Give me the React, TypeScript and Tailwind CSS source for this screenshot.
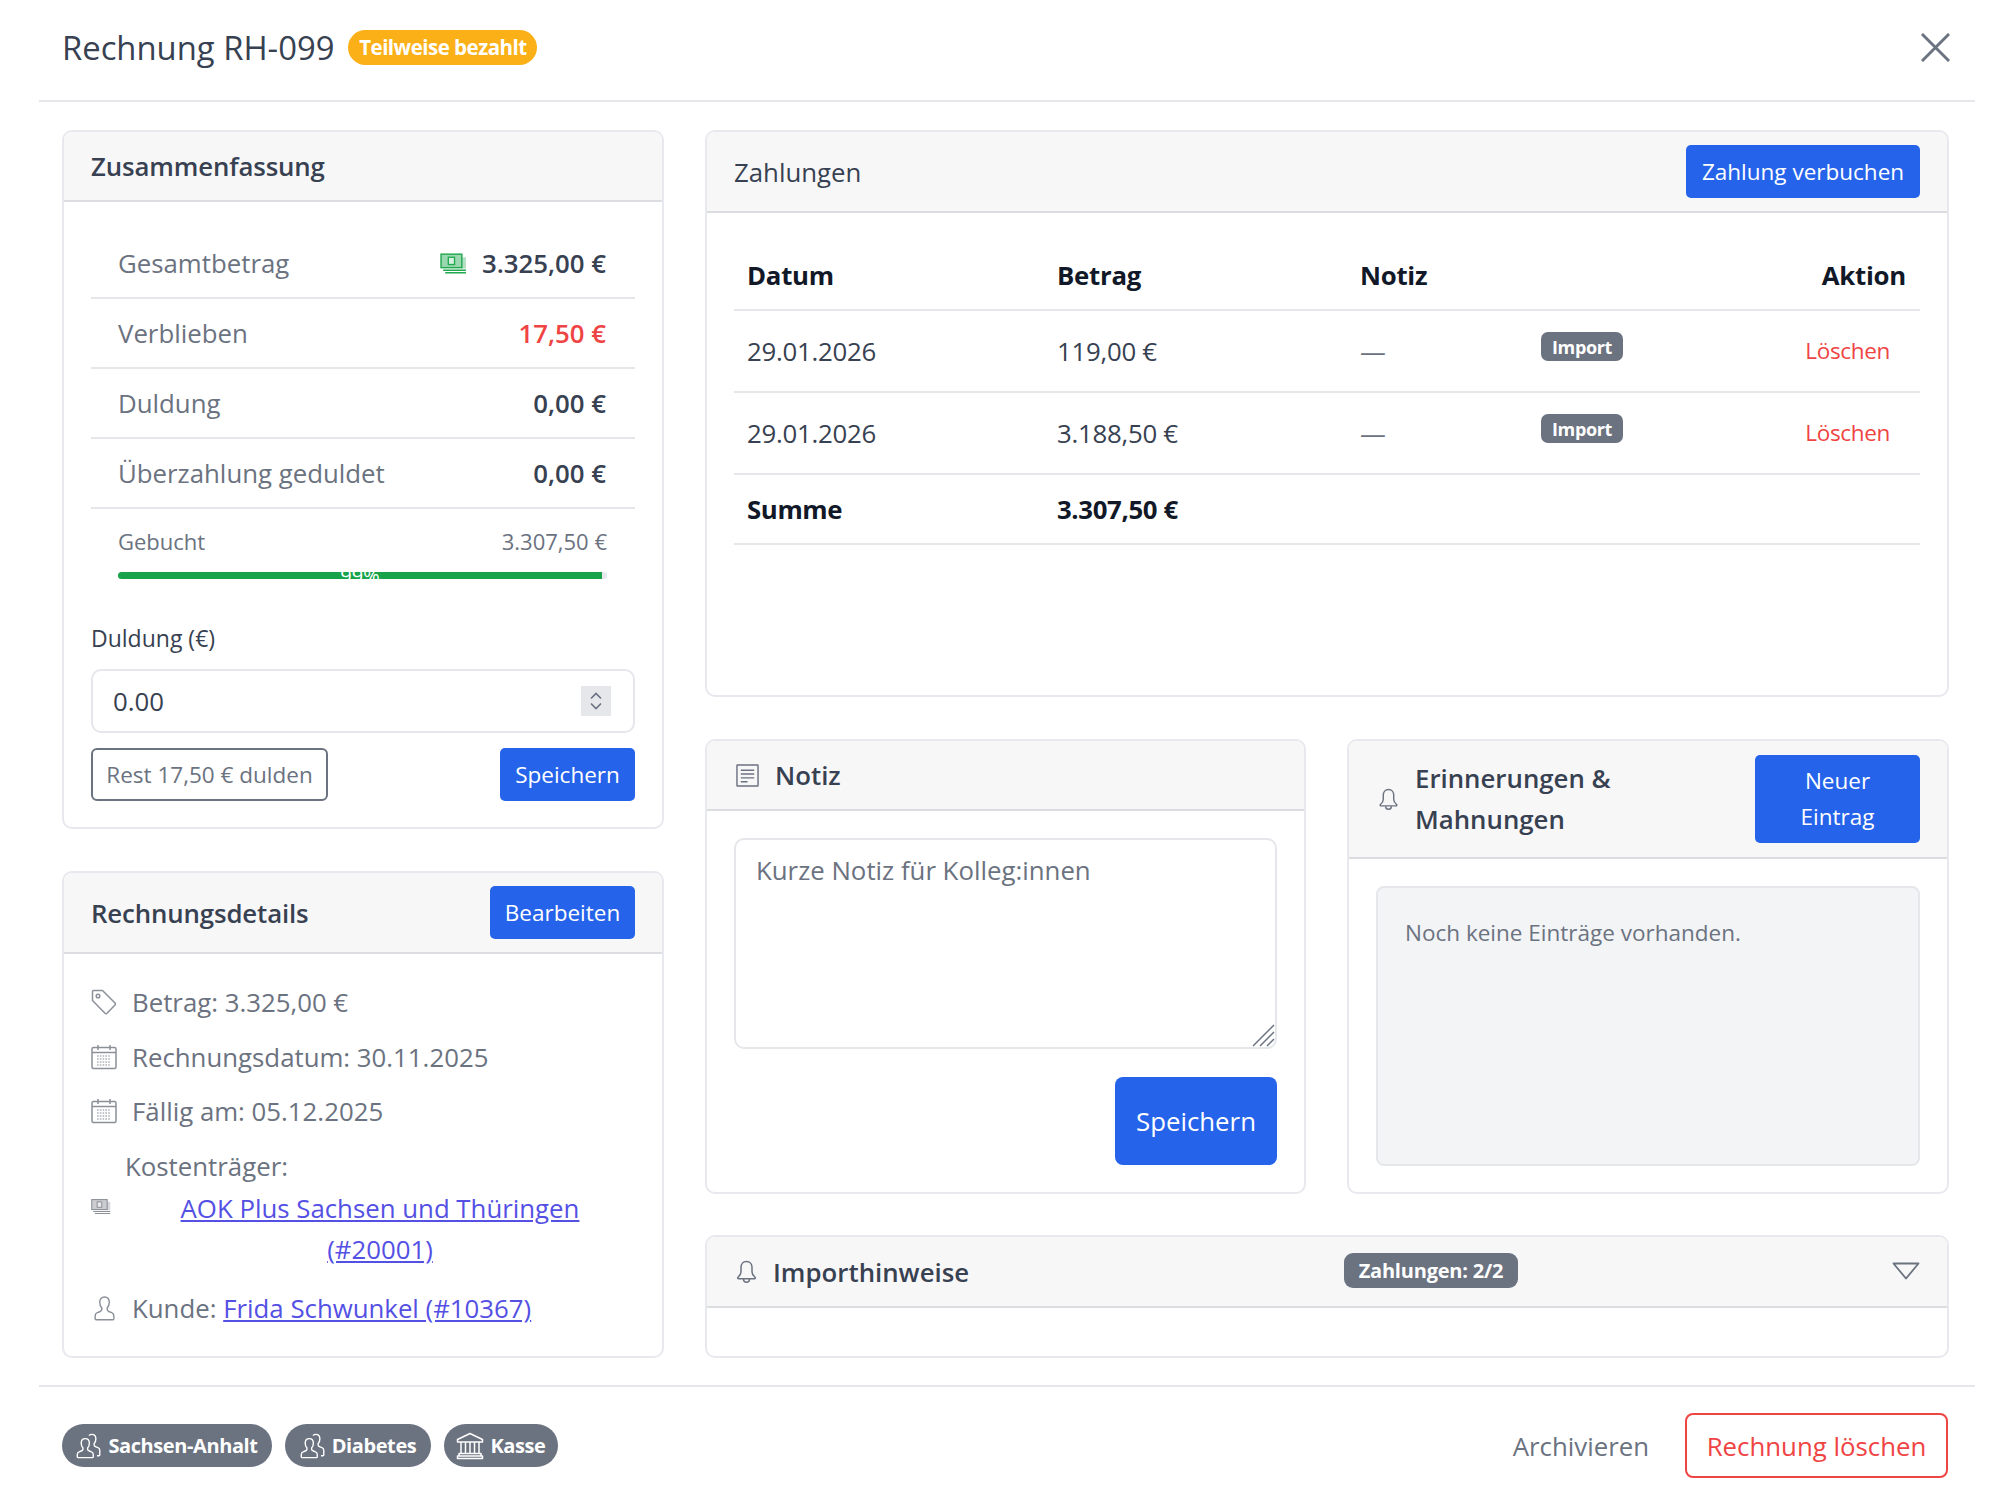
import React from "react";

const Card = ({ className = "", children }: { className?: string; children: React.ReactNode }) => (
  <div className={`rounded-[10px] border-2 border-[#e8e9ee] bg-white overflow-hidden ${className}`}>{children}</div>
);

const CardHead = ({ className = "", children }: { className?: string; children: React.ReactNode }) => (
  <div className={`flex items-center justify-between bg-[#f7f7f8] border-b-2 border-[#dcdde0] ${className}`}>{children}</div>
);

const BlueButton = ({ className = "", children }: { className?: string; children: React.ReactNode }) => (
  <button className={`rounded-[5px] bg-[#2563eb] text-white text-center ${className}`}>{children}</button>
);

const CashIcon = ({ className = "" }: { className?: string }) => (
  <svg viewBox="0 0 26 20" className={className} fill="none">
    <rect x="1" y="1" width="20" height="13" fill="currentColor" fillOpacity="0.45" stroke="currentColor" strokeWidth="1.4" />
    <rect x="8" y="4" width="6" height="7" fill="#ffffff" fillOpacity="0.6" stroke="currentColor" strokeWidth="1.3" />
    <path d="M21 4h4v11H21z" fill="currentColor" fillOpacity="0.35" />
    <path d="M3 16.500h22M5 19h20" stroke="currentColor" strokeWidth="1.400" />
  </svg>
);

const TagIcon = ({ className = "" }: { className?: string }) => (
  <svg viewBox="0 0 26 26" className={className} fill="none" stroke="currentColor" strokeWidth="1.5">
    <path d="M1.5 2.5a1 1 0 0 1 1-1h9l12.5 12.5a1.5 1.5 0 0 1 0 2L16 24.3a1.5 1.5 0 0 1-2 0L1.5 11.5z" strokeLinejoin="round" />
    <circle cx="7" cy="7" r="1.8" />
  </svg>
);

const CalendarIcon = ({ className = "" }: { className?: string }) => (
  <svg viewBox="0 0 26 26" className={className} fill="none" stroke="currentColor">
    <rect x="1" y="3.5" width="24" height="21" rx="1.5" strokeWidth="1.5" />
    <path d="M1 8.5h24M7 1v5M19 1v5" strokeWidth="1.5" />
    <path d="M6 12h14M6 15h14M6 18h14M6 21h14" strokeWidth="1.6" strokeDasharray="1.6 1.2" opacity="0.7" />
  </svg>
);

const UserIcon = ({ className = "" }: { className?: string }) => (
  <svg viewBox="0 0 22 26" className={className} fill="none" stroke="currentColor" strokeWidth="1.5">
    <path d="M11 1.5c3.2 0 5 2.4 5 5.6 0 2.6-1 4.7-2.2 6v1.6c0 1 .6 1.6 2.2 2.2l2.6 1c1.6.6 2.2 1.8 2.2 3.2v3.2a1 1 0 0 1-1 1H2.2a1 1 0 0 1-1-1v-3.2c0-1.4.6-2.6 2.2-3.2l2.6-1c1.6-.6 2.2-1.2 2.2-2.2v-1.6C7 11.800 6 9.700 6 7.100 6 3.900 7.800 1.500 11 1.500z" strokeLinejoin="round" />
  </svg>
);

const UsersIcon = ({ className = "" }: { className?: string }) => (
  <svg viewBox="0 0 28 28" className={className} fill="none" stroke="currentColor" strokeWidth="1.5">
    <path d="M10 6c2.800 0 4.400 2.100 4.400 5 0 2.200-.9 4-1.900 5.100v1.400c0 .9.500 1.400 1.900 1.900l2.300.9c1.400.5 1.900 1.600 1.900 2.800v2.400a1 1 0 0 1-1 1H2.400a1 1 0 0 1-1-1v-2.400c0-1.200.5-2.300 1.900-2.800l2.300-.9c1.400-.5 1.900-1 1.900-1.900v-1.400C6.500 15 5.600 13.200 5.600 11c0-2.900 1.600-5 4.400-5z" strokeLinejoin="round" />
    <path d="M14 2.800c.8-.9 1.900-1.300 3-1.300 2.800 0 4.400 2.100 4.400 5 0 2.200-.9 4-1.900 5.100v1.400c0 .9.500 1.400 1.900 1.900l2.300.9c1.400.5 1.900 1.600 1.900 2.800v4.900a1 1 0 0 1-1 1h-2" strokeLinejoin="round" />
  </svg>
);

const BankIcon = ({ className = "" }: { className?: string }) => (
  <svg viewBox="0 0 28 28" className={className} fill="none" stroke="currentColor" strokeWidth="1.5">
    <path d="M14 1.500 26.500 7.500v2.500h-25V7.500z" strokeLinejoin="round" />
    <path d="M5 10v11M9.500 10v11M14 10v11M18.500 10v11M23 10v11" />
    <path d="M3 21.500h22v2.500H3zM1.500 24h25v2.500h-25z" strokeLinejoin="round" />
  </svg>
);

const NoteIcon = ({ className = "" }: { className?: string }) => (
  <svg viewBox="0 0 24 24" className={className} fill="none" stroke="currentColor" strokeWidth="1.500">
    <rect x="1" y="1" width="22" height="22" rx="0.5" />
    <path d="M5 6.500h14M5 10.500h14M5 14.500h14M5 18.500h7" />
  </svg>
);

const BellIcon = ({ className = "" }: { className?: string }) => (
  <svg viewBox="0 0 20 24" className={className} fill="none" stroke="currentColor" strokeWidth="1.500">
    <path d="M10 1.500c-3.500 0-5.500 2.700-5.500 6v4.500c0 2.500-1.300 3.800-3 5.300-.6.600-.2 1.400.6 1.400h15.800c.8 0 1.200-.8.600-1.400-1.700-1.500-3-2.800-3-5.300V7.500c0-3.300-2-6-5.500-6z" strokeLinejoin="round" />
    <path d="M7 19c0 2 1.300 3.300 3 3.300s3-1.300 3-3.300" />
  </svg>
);

const SummaryRow = ({ label, children }: { label: string; children: React.ReactNode }) => (
  <div className="flex h-[70px] items-center justify-between border-b-2 border-[#e5e7eb] pl-[27px] pr-[29px]">
    <span className="text-[#6b7280]">{label}</span>
    {children}
  </div>
);

const Pill = ({ icon, className = "", children }: { icon: React.ReactNode; className?: string; children: React.ReactNode }) => (
  <span className={`flex h-[43px] items-center justify-center gap-[6px] rounded-full bg-[#6b7280] text-[20px] font-bold tracking-[-0.02em] text-white ${className}`}>
    {icon}
    {children}
  </span>
);

const DetailRow = ({ icon, children }: { icon: React.ReactNode; children: React.ReactNode }) => (
  <div className="flex h-[54.5px] items-center gap-[15px] text-[#6b7280]">
    <span className="flex w-[26px] justify-center text-[#8b9099]">{icon}</span>
    <span>{children}</span>
  </div>
);

const payments = [
  { date: "29.01.2026", amount: "119,00 €" },
  { date: "29.01.2026", amount: "3.188,50 €" },
];

export default function App() {
  return (
    <div className="ml-[39px] h-[1500px] w-[1936px] bg-white font-['Open_Sans','Noto_Sans',sans-serif] text-[25.8px] leading-[40px] text-[#374151]">
      <header className="relative flex h-[102px] items-center gap-[14px] border-b-2 border-[#e5e7eb] pb-[4px] pl-[23px]">
        <h1 className="text-[32.8px]">Rechnung RH-099</h1>
        <span className="mb-[2px] flex h-[35px] w-[189px] items-center justify-center rounded-full bg-[#fbb017] text-[20.500px] font-bold tracking-[-0.025em] text-white">
          Teilweise bezahlt
        </span>
        <svg viewBox="0 0 30 30" className="absolute left-[1882px] top-[33px] h-[29px] w-[29px] text-[#6b7280]" fill="none" stroke="currentColor" strokeWidth="3">
          <path d="M1 1l28 28M29 1 1 29" />
        </svg>
      </header>

      <main className="flex gap-[41px] pl-[23px] pt-[28px]">
        <div className="flex w-[602px] flex-col gap-[42px]">
          <Card className="h-[699px]">
            <CardHead className="h-[70px] px-[27px]">
              <span className="font-semibold tracking-[-0.005em]">Zusammenfassung</span>
            </CardHead>
            <div className="px-[27px] pt-[27px]">
              <SummaryRow label="Gesamtbetrag">
                <span className="flex items-center gap-[15px] font-semibold">
                  <CashIcon className="h-[21px] w-[27px] text-[#22a94f]" />
                  3.325,00 €
                </span>
              </SummaryRow>
              <SummaryRow label="Verblieben">
                <span className="font-semibold text-[#ef4444]">17,50 €</span>
              </SummaryRow>
              <SummaryRow label="Duldung">
                <span className="font-semibold">0,00 €</span>
              </SummaryRow>
              <SummaryRow label="Überzahlung geduldet">
                <span className="font-semibold">0,00 €</span>
              </SummaryRow>
              <div className="pl-[27px] pr-[28px] pt-[12px]">
                <div className="flex justify-between text-[22px] leading-[40px] text-[#6b7280]">
                  <span>Gebucht</span>
                  <span>3.307,50 €</span>
                </div>
                <div className="relative mt-[11px] h-[7px] overflow-hidden rounded-full bg-[#e5e7eb]">
                  <div className="flex h-full w-[99%] justify-center bg-[#16a34a] text-[20px] leading-[7px] text-white">99%</div>
                </div>
              </div>
              <div className="mt-[39px] text-[23px] leading-[40px]">Duldung (€)</div>
              <div className="mt-[11px] flex h-[64px] items-center justify-between rounded-[10px] border-2 border-[#e5e7eb] pl-[20px] pr-[22px]">
                <span>0.00</span>
                <span className="flex h-[30px] w-[30px] items-center justify-center bg-[#e5e7eb]">
                  <svg viewBox="0 0 14 20" className="h-[22px] w-[14px] text-[#6b7280]" fill="none" stroke="currentColor" strokeWidth="1.600">
                    <path d="M2 7.500 7 2.500l5 5M2 12.500l5 5 5-5" />
                  </svg>
                </span>
              </div>
              <div className="mt-[15px] flex items-center justify-between">
                <button className="h-[53px] w-[237px] rounded-[6px] border-2 border-[#6b7280] text-[22.500px] text-[#6b7280]">Rest 17,50 € dulden</button>
                <BlueButton className="h-[53px] w-[135px] text-[22.500px]">Speichern</BlueButton>
              </div>
            </div>
          </Card>

          <Card className="h-[487px]">
            <CardHead className="h-[81px] px-[27px]">
              <span className="font-semibold tracking-[-0.005em]">Rechnungsdetails</span>
              <BlueButton className="h-[53px] w-[145px] text-[22.500px]">Bearbeiten</BlueButton>
            </CardHead>
            <div className="px-[27px] pt-[21px]">
              <DetailRow icon={<TagIcon className="h-[26px] w-[26px]" />}>Betrag: 3.325,00 €</DetailRow>
              <DetailRow icon={<CalendarIcon className="h-[26px] w-[26px]" />}>Rechnungsdatum: 30.11.2025</DetailRow>
              <DetailRow icon={<CalendarIcon className="h-[26px] w-[26px]" />}>Fällig am: 05.12.2025</DetailRow>
              <div className="mt-[5px] flex items-center text-[#6b7280]">
                <CashIcon className="mr-[14px] h-[17px] w-[20px] shrink-0 text-[#8b9099]" />
                <div className="w-[482px]">
                  <div className="h-[44px] leading-[44px]">Kostenträger:</div>
                  <div className="pl-[28px] text-center leading-[41px]">
                    <a className="text-[#5450e4] underline">AOK Plus Sachsen und Thüringen (#20001)</a>
                  </div>
                </div>
              </div>
              <div className="mt-[11px]">
                <DetailRow icon={<UserIcon className="h-[26px] w-[21px]" />}>
                  Kunde: <a className="text-[#5450e4] underline">Frida Schwunkel (#10367)</a>
                </DetailRow>
              </div>
            </div>
          </Card>
        </div>

        <div className="flex w-[1244px] flex-col gap-[41px]">
          <Card className="h-[567px] mb-[1px]">
            <CardHead className="h-[81px] px-[27px]">
              <span className="font-medium">Zahlungen</span>
              <BlueButton className="h-[53px] w-[234px] text-[22.500px]">Zahlung verbuchen</BlueButton>
            </CardHead>
            <div className="px-[27px] pt-[28px]">
              <table className="w-full table-fixed border-collapse">
                <colgroup>
                  <col className="w-[310px]" />
                  <col className="w-[303px]" />
                  <col className="w-[181px]" />
                  <col className="w-[250px]" />
                  <col />
                </colgroup>
                <thead>
                  <tr className="h-[69px] border-b-2 border-[#e5e7eb] text-[#111827]">
                    <th className="pl-[13px] text-left font-bold tracking-[-0.01em]">Datum</th>
                    <th className="pl-[13px] text-left font-bold tracking-[-0.01em]">Betrag</th>
                    <th className="pl-[13px] text-left font-bold tracking-[-0.01em]">Notiz</th>
                    <th />
                    <th className="pr-[14px] text-right font-bold tracking-[-0.01em]">Aktion</th>
                  </tr>
                </thead>
                <tbody>
                  {payments.map((p, i) => (
                    <tr key={i} className="h-[82px] border-b-2 border-[#e5e7eb]">
                      <td className="pl-[13px] tracking-[-0.01em]">{p.date}</td>
                      <td className="pl-[13px] tracking-[-0.01em]">{p.amount}</td>
                      <td className="pl-[13px] text-[#6b7280]">—</td>
                      <td className="pl-[13px] pt-[21px] align-top">
                        <span className="flex h-[29px] w-[82px] items-center justify-center rounded-[7px] bg-[#6b7280] text-[18px] font-bold tracking-[-0.02em] text-white">Import</span>
                      </td>
                      <td className="pr-[30px] text-right text-[22.500px] tracking-[-0.015em] text-[#ef4444]">Löschen</td>
                    </tr>
                  ))}
                  <tr className="h-[70px] border-b-2 border-[#e5e7eb] font-bold tracking-[-0.015em] text-[#111827]">
                    <td className="pl-[13px]">Summe</td>
                    <td className="pl-[13px]">3.307,50 €</td>
                    <td colSpan={3} />
                  </tr>
                </tbody>
              </table>
            </div>
          </Card>

          <div className="flex gap-[41px]">
            <Card className="h-[455px] w-[601px]">
              <CardHead className="h-[70px] justify-start gap-[16px] pl-[29px]">
                <NoteIcon className="h-[23px] w-[23px] text-[#6b7280]" />
                <span className="font-semibold">Notiz</span>
              </CardHead>
              <div className="flex flex-col items-end px-[27px] pt-[27px]">
                <div className="relative h-[211px] w-full rounded-[10px] border-2 border-[#e5e7eb] pl-[20px] pt-[10px] text-[#6b7280]">
                  Kurze Notiz für Kolleg:innen
                  <svg viewBox="0 0 24 24" className="absolute bottom-0 right-0 h-[24px] w-[24px] text-[#6b7280]" fill="none" stroke="currentColor" strokeWidth="1.500">
                    <path d="M2 23 23 2M9 23 23 9M16 23l7-7" />
                  </svg>
                </div>
                <BlueButton className="mt-[28px] h-[88px] w-[162px] rounded-[8px]">Speichern</BlueButton>
              </div>
            </Card>

            <Card className="h-[455px] w-[602px]">
              <CardHead className="h-[118px] gap-[17px] pl-[30px] pr-[27px]">
                <BellIcon className="h-[23px] w-[19px] shrink-0 text-[#6b7280]" />
                <span className="flex-1 font-semibold leading-[41px]">
                  Erinnerungen &amp;
                  <br />
                  Mahnungen
                </span>
                <BlueButton className="h-[88px] w-[165px] text-[22.500px] leading-[36px]">
                  Neuer
                  <br />
                  Eintrag
                </BlueButton>
              </CardHead>
              <div className="px-[27px] pt-[27px]">
                <div className="h-[280px] rounded-[8px] border-2 border-[#e5e7eb] bg-[#f3f4f6] pl-[27px] pt-[25px] text-[22.500px] text-[#6b7280]">
                  Noch keine Einträge vorhanden.
                </div>
              </div>
            </Card>
          </div>

          <Card className="h-[123px]">
            <CardHead className="relative h-[71px] justify-start gap-[16px] pl-[29px]">
              <BellIcon className="h-[24px] w-[21px] text-[#6b7280]" />
              <span className="font-semibold">Importhinweise</span>
              <span className="absolute left-[637px] top-[16px] flex h-[35px] w-[174px] items-center justify-center rounded-[9px] bg-[#6b7280] text-[20px] font-bold tracking-[-0.01em] text-white">
                Zahlungen: 2/2
              </span>
              <svg viewBox="0 0 28 18" className="absolute right-[27px] top-[25px] h-[18px] w-[28px] text-[#6b7280]" fill="none" stroke="currentColor" strokeWidth="1.800">
                <path d="M1.500 1.500h25L14 16.500z" strokeLinejoin="round" />
              </svg>
            </CardHead>
          </Card>
        </div>
      </main>

      <footer className="mt-[27px] flex h-[119px] items-center justify-between border-t-2 border-[#e5e7eb] pl-[23px] pr-[27px]">
        <div className="flex gap-[13px]">
          <Pill className="w-[210px]" icon={<UsersIcon className="h-[26px] w-[26px]" />}>Sachsen-Anhalt</Pill>
          <Pill className="w-[146px]" icon={<UsersIcon className="h-[26px] w-[26px]" />}>Diabetes</Pill>
          <Pill className="w-[114px]" icon={<BankIcon className="h-[28px] w-[28px]" />}>Kasse</Pill>
        </div>
        <div className="flex items-center gap-[36px]">
          <span className="text-[#6b7280]">Archivieren</span>
          <button className="h-[65px] w-[263px] rounded-[8px] border-2 border-[#ef4444] text-[#ef4444]">Rechnung löschen</button>
        </div>
      </footer>
    </div>
  );
}
